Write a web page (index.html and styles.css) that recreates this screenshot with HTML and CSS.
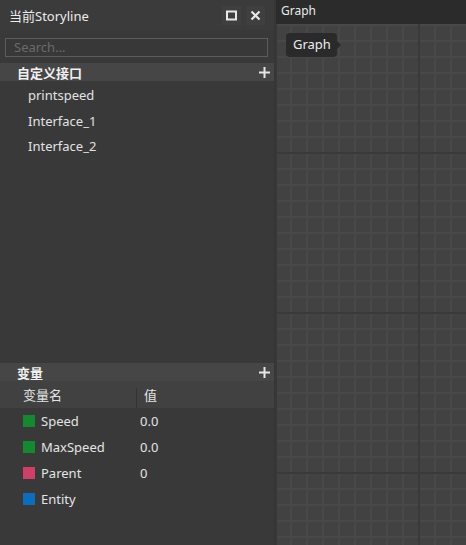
FILE: index.html
```html
<!DOCTYPE html>
<html>
<head>
<meta charset="utf-8">
<link rel="stylesheet" href="styles.css">
</head>
<body>
<div class="app">
  <div class="left">
    <div class="titlebar">
      <span class="title">当前Storyline</span>
      <div class="tb-btns">
        <span class="tb-btn">
          <svg width="11" height="11" viewBox="0 0 11 11"><rect x="1" y="1.5" width="9" height="8" fill="none" stroke="#e8e8e8" stroke-width="2"/></svg>
        </span>
        <span class="tb-btn">
          <svg width="11" height="11" viewBox="0 0 11 11"><path d="M1.5 1.5 L9.5 9.5 M9.5 1.5 L1.5 9.5" stroke="#e8e8e8" stroke-width="2.2"/></svg>
        </span>
      </div>
    </div>
    <div class="search-wrap">
      <div class="search">Search...</div>
    </div>
    <div class="section-head">
      <span>自定义接口</span>
      <svg class="plus" width="11" height="11" viewBox="0 0 11 11"><path d="M5.5 0 V11 M0 5.5 H11" stroke="#e6e6e6" stroke-width="2"/></svg>
    </div>
    <div class="list">
      <div class="item">printspeed</div>
      <div class="item">Interface_1</div>
      <div class="item">Interface_2</div>
    </div>
    <div class="section-head">
      <span>变量</span>
      <svg class="plus" width="11" height="11" viewBox="0 0 11 11"><path d="M5.5 0 V11 M0 5.5 H11" stroke="#e6e6e6" stroke-width="2"/></svg>
    </div>
    <div class="vars">
      <div class="colhead">
        <span class="c-name">变量名</span>
        <span class="c-div"></span>
        <span class="c-val">值</span>
      </div>
      <div class="vrow"><span class="sw green"></span><span class="vname">Speed</span><span class="vval">0.0</span></div>
      <div class="vrow"><span class="sw green"></span><span class="vname">MaxSpeed</span><span class="vval">0.0</span></div>
      <div class="vrow"><span class="sw pink"></span><span class="vname">Parent</span><span class="vval">0</span></div>
      <div class="vrow"><span class="sw blue"></span><span class="vname">Entity</span><span class="vval"></span></div>
    </div>
  </div>
  <div class="splitter"></div>
  <div class="graph">
    <div class="graph-head">Graph</div>
    <div class="canvas">
      <div class="tooltip">Graph</div>
    </div>
  </div>
</div>
</body>
</html>
```
FILE: styles.css
```css
* { box-sizing: border-box; }
html, body {
  margin: 0;
  padding: 0;
  width: 466px;
  height: 545px;
  overflow: hidden;
  background: #393939;
  font-family: "Noto Sans", "Noto Sans CJK SC", sans-serif;
  font-size: 13px;
  color: #e4e4e4;
}
.app {
  display: flex;
  height: 545px;
}
.left {
  width: 274px;
  display: flex;
  flex-direction: column;
  background: #393939;
}
.titlebar {
  height: 30px;
  display: flex;
  align-items: center;
  justify-content: space-between;
  padding-left: 9px;
  padding-right: 9px;
  background: #3b3b3b;
}
.title {
  font-size: 13px;
  color: #ececec;
}
.tb-btns {
  display: flex;
  gap: 5px;
}
.tb-btn {
  width: 19px;
  height: 19px;
  display: flex;
  align-items: center;
  justify-content: center;
  background: #3f3f3f;
}
.search-wrap {
  padding: 8px 6px 6px 5px;
}
.search {
  height: 19px;
  border: 1px solid #5c5c5c;
  background: #383838;
  color: #6a6a6a;
  font-size: 13px;
  line-height: 17px;
  padding-left: 8px;
}
.section-head {
  height: 18px;
  background: #464646;
  display: flex;
  align-items: center;
  justify-content: space-between;
  padding-left: 17px;
  padding-right: 4px;
  font-weight: bold;
  color: #f0f0f0;
  font-size: 13px;
}
.list {
  height: 282px;
  display: flex;
  flex-direction: column;
  padding-top: 2px;
}
.item {
  height: 25.7px;
  line-height: 25px;
  padding-left: 28px;
  color: #e2e2e2;
}
.vars {
  flex: 1;
  display: flex;
  flex-direction: column;
}
.colhead {
  height: 27px;
  background: #414141;
  display: flex;
  align-items: center;
}
.c-name {
  padding-left: 23px;
  box-sizing: content-box;
  width: 90px;
}
.c-div {
  width: 1px;
  height: 20px;
  margin-top: 6px;
  background: #333;
  margin-left: 23px;
}
.c-val {
  padding-left: 7px;
}
.vrow {
  height: 26px;
  display: flex;
  align-items: center;
}
.sw {
  width: 12px;
  height: 12px;
  margin-left: 23px;
}
.green { background: #138a2f; }
.pink { background: #cf3f68; }
.blue { background: #0c6dbd; }
.vname {
  padding-left: 6px;
  box-sizing: content-box;
  width: 99px;
}
.splitter {
  width: 2px;
  background: #363636;
}
.graph {
  flex: 1;
  display: flex;
  flex-direction: column;
  background: #2b2b2b;
}
.graph-head {
  height: 24px;
  line-height: 22px;
  padding-left: 5px;
  font-size: 12px;
  color: #eaeaea;
  background: #2b2b2b;
}
.canvas {
  flex: 1;
  position: relative;
  border-left: 1px solid #383838;
  background-color: #424242;
  background-image:
    linear-gradient(to right, #3a3a3a 2px, transparent 2px),
    linear-gradient(to bottom, #3a3a3a 2px, transparent 2px),
    linear-gradient(to right, #484848 2px, transparent 2px),
    linear-gradient(to bottom, #484848 2px, transparent 2px);
  background-size: 160px 160px, 160px 160px, 16px 16px, 16px 16px;
  background-position: 141px 0, 0 128px, 13px 0, 0 0;
}
.tooltip {
  position: absolute;
  left: 9px;
  top: 9px;
  height: 24px;
  width: 51px;
  line-height: 23px;
  padding-left: 7px;
  background: #2a2a2a;
  border-radius: 4px;
  color: #ededed;
  font-size: 13px;
}
.tooltip::after {
  content: "";
  position: absolute;
  right: -4px;
  top: 8px;
  border-left: 4px solid #2a2a2a;
  border-top: 4px solid transparent;
  border-bottom: 4px solid transparent;
}
```
